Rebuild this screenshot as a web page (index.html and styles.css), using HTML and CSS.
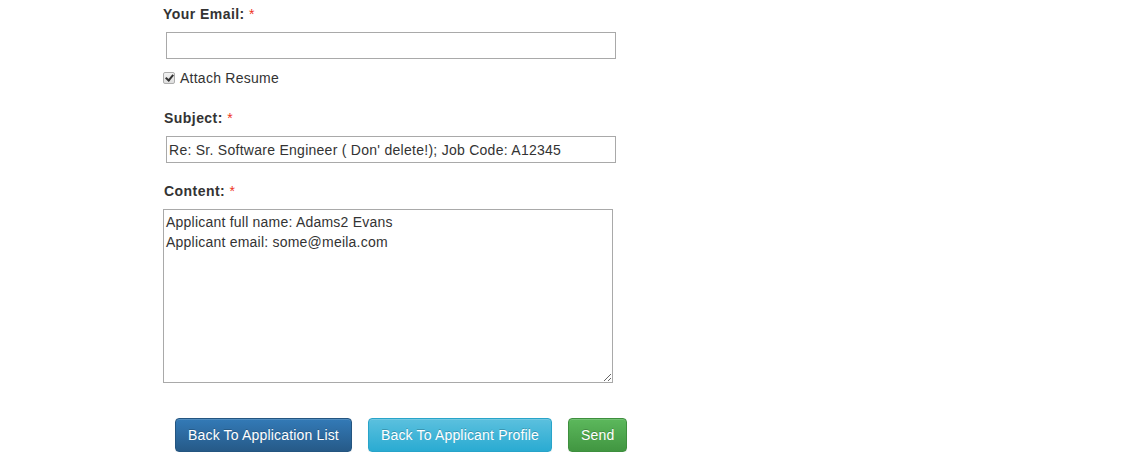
FILE: index.html
```html
<!DOCTYPE html>
<html>
<head>
<meta charset="utf-8">
<link rel="stylesheet" href="styles.css">
</head>
<body>
<form class="form">
  <label class="label">Your Email: <span class="req">*</span></label>
  <input class="field" type="text">
  <label class="check-row"><input class="check" type="checkbox" checked> Attach Resume</label>
  <label class="label label-subject">Subject: <span class="req">*</span></label>
  <input class="field" type="text" value="Re: Sr. Software Engineer ( Don' delete!); Job Code: A12345">
  <label class="label label-content">Content: <span class="req">*</span></label>
  <textarea class="area">Applicant full name: Adams2 Evans
Applicant email: some@meila.com</textarea>
  <div class="actions">
    <button type="button" class="btn btn-primary">Back To Application List</button>
    <button type="button" class="btn btn-info">Back To Applicant Profile</button>
    <button type="button" class="btn btn-success">Send</button>
  </div>
</form>
</body>
</html>
```

FILE: styles.css
```css
html, body {
  margin: 0;
  padding: 0;
  background: #fff;
}
body {
  font-family: "Liberation Sans", Arial, sans-serif;
  font-size: 14px;
  line-height: 20px;
  color: #333;
  letter-spacing: 0.25px;
}
.form {
  display: flex;
  flex-direction: column;
  align-items: flex-start;
  padding: 4px 0 0 163px;
}
.label {
  display: block;
  font-weight: bold;
  height: 20px;
  letter-spacing: 0.45px;
}
.label-subject { margin: 20px 0 0 1px; }
.label-content { margin: 18px 0 0 1px; }
.req {
  color: #e32;
  font-weight: normal;
  letter-spacing: 0;
}
.field {
  box-sizing: border-box;
  width: 450px;
  height: 27px;
  margin: 8px 0 0 3px;
  padding: 1px 2px;
  border: 1px solid #a9a9a9;
  border-radius: 0;
  font-family: inherit;
  font-size: 14px;
  letter-spacing: 0.27px;
  color: #333;
  outline: none;
}
.check-row {
  display: flex;
  align-items: center;
  height: 20px;
  margin-top: 9px;
}
.check {
  appearance: none;
  -webkit-appearance: none;
  position: relative;
  box-sizing: border-box;
  width: 12px;
  height: 12px;
  margin: 0 5px 0 0;
  border: 1px solid #adadad;
  border-radius: 2px;
  background: linear-gradient(to bottom, #f2f2f2, #dedede);
}
.check:checked::after {
  content: "";
  position: absolute;
  left: 3px;
  top: 0;
  width: 3px;
  height: 6px;
  border: solid #333;
  border-width: 0 2px 2px 0;
  transform: rotate(40deg);
}
.area {
  box-sizing: border-box;
  width: 450px;
  height: 174px;
  margin-top: 8px;
  padding: 2px 2px 0;
  border: 1px solid #a9a9a9;
  font-family: inherit;
  font-size: 14px;
  line-height: 20px;
  letter-spacing: 0.22px;
  color: #333;
  resize: both;
  outline: none;
}
.actions {
  display: flex;
  gap: 16px;
  margin: 35px 0 0 12px;
}
.btn {
  height: 34px;
  padding: 6px 12px;
  border: 1px solid transparent;
  border-radius: 4px;
  font-family: inherit;
  font-size: 14px;
  line-height: 20px;
  letter-spacing: 0.17px;
  color: #fff;
  text-shadow: 0 -1px 0 rgba(0, 0, 0, 0.2);
  box-shadow: inset 0 1px 0 rgba(255, 255, 255, 0.15), 0 1px 1px rgba(0, 0, 0, 0.075);
  cursor: pointer;
}
.btn-primary {
  background: linear-gradient(to bottom, #337ab7 0%, #265a88 100%);
  border-color: #245580;
}
.btn-info {
  background: linear-gradient(to bottom, #5bc0de 0%, #2aabd2 100%);
  border-color: #28a4c9;
}
.btn-success {
  background: linear-gradient(to bottom, #5cb85c 0%, #419641 100%);
  border-color: #3e8f3e;
}
```
